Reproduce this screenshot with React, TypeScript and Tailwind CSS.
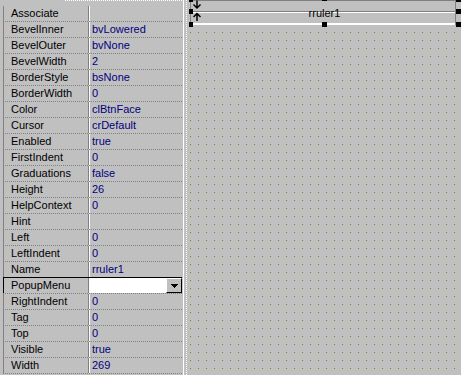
import React from "react";

type Prop = { name: string; value: string; editing?: boolean };

const props: Prop[] = [
  { name: "Associate", value: "" },
  { name: "BevelInner", value: "bvLowered" },
  { name: "BevelOuter", value: "bvNone" },
  { name: "BevelWidth", value: "2" },
  { name: "BorderStyle", value: "bsNone" },
  { name: "BorderWidth", value: "0" },
  { name: "Color", value: "clBtnFace" },
  { name: "Cursor", value: "crDefault" },
  { name: "Enabled", value: "true" },
  { name: "FirstIndent", value: "0" },
  { name: "Graduations", value: "false" },
  { name: "Height", value: "26" },
  { name: "HelpContext", value: "0" },
  { name: "Hint", value: "" },
  { name: "Left", value: "0" },
  { name: "LeftIndent", value: "0" },
  { name: "Name", value: "rruler1" },
  { name: "PopupMenu", value: "", editing: true },
  { name: "RightIndent", value: "0" },
  { name: "Tag", value: "0" },
  { name: "Top", value: "0" },
  { name: "Visible", value: "true" },
  { name: "Width", value: "269" },
];

const dotted = "h-px bg-[repeating-linear-gradient(90deg,#808080_0_1px,transparent_1px_2px)]";

function Row({ p, first }: { p: Prop; first: boolean }) {
  // top line: dotted separator, black for the selected row
  const top = p.editing ? "h-px bg-black" : first ? "h-px" : dotted;
  return (
    <div className="flex flex-col">
      <div className={top} />
      <div className={`flex h-[15px] border-l ${p.editing ? "border-black" : "border-[#808080]"}`}>
        <div className="w-[84px] flex flex-col">
          <div className="flex-1 pl-[7px] text-black leading-[15px] whitespace-nowrap">{p.name}</div>
          {p.editing && <div className="h-px bg-white" />}
        </div>
        <div className="w-px bg-[#808080]" />
        {p.editing ? (
          <div className="flex-1 flex bg-white">
            <div className="flex-1" />
            <div className="w-[16px] flex items-center justify-center bg-[#c0c0c0] border-t border-l border-t-white border-l-white border-r border-b border-r-black border-b-black">
              <svg width="7" height="4" viewBox="0 0 7 4" shapeRendering="crispEdges">
                <path d="M0 0h7v1h-1v1h-1v1h-1v1h-1v-1h-1v-1h-1v-1h-1z" fill="#000" />
              </svg>
            </div>
          </div>
        ) : (
          <>
            <div className="w-px bg-white" />
            <div className="flex-1 pl-[2px] text-[#000080] leading-[15px] whitespace-nowrap">{p.value}</div>
          </>
        )}
      </div>
    </div>
  );
}

function Inspector() {
  return (
    <div className="flex h-full w-[186px] shrink-0">
      <div className="w-[3px]" />
      <div className="w-[179px] flex flex-col">
        <div className="h-[5px]">
          <div className="ml-[62px] h-px bg-[repeating-linear-gradient(90deg,#ffffff_0_1px,transparent_1px_2px)]" />
        </div>
        {props.map((p, i) => (
          <Row key={p.name} p={p} first={i === 0} />
        ))}
        <div className={dotted} />
      </div>
      <div className="w-px" />
      <div className="w-px bg-white" />
      <div className="w-[2px]" />
    </div>
  );
}

function Ruler() {
  return (
    <div className="absolute left-[3px] top-[-1px] w-[269px] h-[26px] bg-[#c0c0c0]">
      <div className="flex flex-col h-full w-[266px] border-l border-r border-[#808080]">
        <div className="h-px" />
        <div className="h-px bg-[#808080]" />
        <div className="h-[10px]" />
        <div className="h-px bg-[#808080]" />
        <div className="h-px bg-white" />
        <div className="h-[10px]" />
        <div className="h-[2px] bg-white" />
      </div>
      <svg className="absolute left-[2px] top-0" width="10" height="24" viewBox="0 0 10 24">
        <path d="M5 1.5V9M1.5 5.5L5 9L8.5 5.5" stroke="#000" strokeWidth="1.5" fill="none" />
        <path d="M5 22V14.5M1.5 18L5 14.5L8.5 18" stroke="#000" strokeWidth="1.5" fill="none" />
      </svg>
      <div className="absolute left-0 right-0 top-[7px] text-center text-black leading-[15px]">rruler1</div>
    </div>
  );
}

function Handles() {
  const h = "absolute bg-black";
  return (
    <>
      <div className={`${h} left-[2px] top-[-3px] w-[4px] h-[5px]`} />
      <div className={`${h} left-[2px] top-[9px] w-[4px] h-[5px]`} />
      <div className={`${h} left-[2px] top-[22px] w-[4px] h-[5px]`} />
      <div className={`${h} left-[135px] top-[-4px] w-[5px] h-[5px]`} />
      <div className={`${h} left-[135px] top-[22px] w-[5px] h-[5px]`} />
      <div className={`${h} left-[269px] top-[-3px] w-[5px] h-[5px]`} />
      <div className={`${h} left-[269px] top-[9px] w-[5px] h-[5px]`} />
      <div className={`${h} left-[269px] top-[22px] w-[5px] h-[5px]`} />
    </>
  );
}

export default function App() {
  return (
    <div className="w-[461px] h-[375px] flex bg-[#c0c0c0] overflow-hidden font-['Liberation_Sans',Arial,sans-serif] text-[11px]">
      <Inspector />
      <div className="flex">
        <div className="w-px bg-[repeating-linear-gradient(180deg,#ffffff_0_1px,transparent_1px_2px)]" />
      </div>
      {/* form designer canvas */}
      <div className="relative flex-1 h-full overflow-hidden">
        {/* 8px dot grid: vertical stripes masked by horizontal stripes */}
        <div className="absolute inset-0 bg-[repeating-linear-gradient(90deg,transparent_0_3px,#808000_3px_4px,transparent_4px_8px)] [mask-image:repeating-linear-gradient(180deg,#000_0_1px,transparent_1px_8px)]" />
        <Ruler />
        <Handles />
      </div>
    </div>
  );
}
